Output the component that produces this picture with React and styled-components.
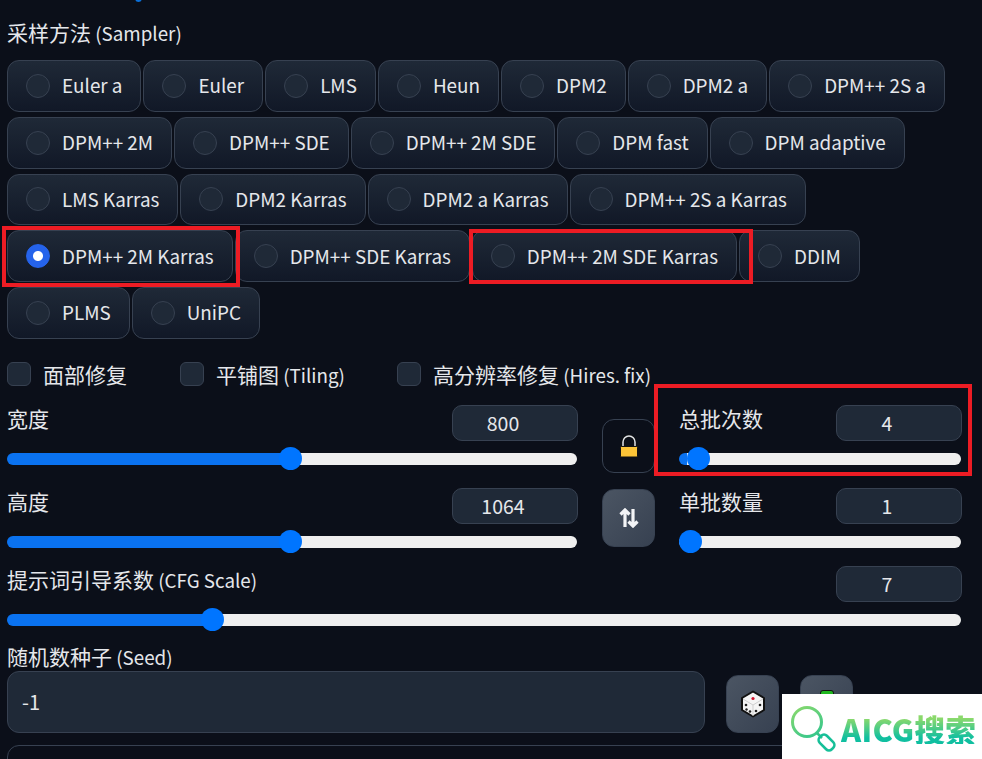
import styled, { createGlobalStyle } from 'styled-components';

const GlobalStyle = createGlobalStyle`
    html, body {
        margin: 0;
        background: #0b0f19;
    }
    body {
        font-family: 'Noto Sans CJK SC', 'Noto Sans', sans-serif;
        color: #f3f4f6;
    }
`;

const SAMPLERS = [
    'Euler a', 'Euler', 'LMS', 'Heun', 'DPM2', 'DPM2 a', 'DPM++ 2S a',
    'DPM++ 2M', 'DPM++ SDE', 'DPM++ 2M SDE', 'DPM fast', 'DPM adaptive',
    'LMS Karras', 'DPM2 Karras', 'DPM2 a Karras', 'DPM++ 2S a Karras',
    'DPM++ 2M Karras', 'DPM++ SDE Karras', 'DPM++ 2M SDE Karras', 'DDIM',
    'PLMS', 'UniPC',
];

const Page = styled.div`
    position: relative;
    box-sizing: border-box;
    width: 982px;
    height: 759px;
    overflow: hidden;
    padding: 19px 20px 0 7px;
    font-size: 18.8px;
`;

const TopThumb = styled.div`
    position: absolute;
    left: 135px;
    top: -6px;
    width: 7px;
    height: 8px;
    border-radius: 50%;
    background: #0a6fd8;
`;

const Label = styled.div`
    height: 26px;
    font-size: 18.8px;
    line-height: 26px;
    color: #e5e7eb;
    white-space: nowrap;
`;

// CJK runs sit a little larger than the latin text next to them
const Han = styled.span`
    font-size: 21px;
`;

const Samplers = styled.div`
    display: flex;
    flex-wrap: wrap;
    gap: 5px 2px;
    margin-top: 15px;
`;

const Option = styled.label`
    display: flex;
    align-items: center;
    gap: 12px;
    box-sizing: border-box;
    height: 51.75px;
    padding: 0 18px;
    border: 1px solid #374151;
    border-radius: 12px;
    background: linear-gradient(to bottom, #1f2937, #111827);
    font-size: 18.85px;
    line-height: 24px;
    color: #e5e7eb;
`;

const OptionText = styled.span`
    margin-top: -1px;
`;

const Radio = styled.input`
    appearance: none;
    box-sizing: border-box;
    width: 24px;
    height: 24px;
    margin: 0;
    border: 1px solid #374151;
    border-radius: 50%;
    background: #1f2937;

    &:checked {
        border-color: #2563eb;
        background: radial-gradient(circle, #fff 0 4.5px, #2563eb 5.5px);
    }
`;

const Checks = styled.div`
    display: flex;
    margin-top: 23px;
`;

const Check = styled.label`
    display: flex;
    align-items: center;
    gap: 12px;
    height: 24px;
    width: ${(p) => (p.$w ? `${p.$w}px` : 'auto')};
    white-space: nowrap;
    color: #e5e7eb;
`;

const Box = styled.input`
    appearance: none;
    box-sizing: border-box;
    width: 24px;
    height: 24px;
    margin: 0;
    border: 1px solid #374151;
    border-radius: 6px;
    background: #1f2937;
`;

const Sizes = styled.div`
    display: grid;
    grid-template-columns: 571px 101px 283px;
    row-gap: 15px;
    margin-top: 19px;
`;

const Field = styled.div`
    display: flex;
    flex-direction: column;
`;

const CfgField = styled(Field)`
    margin-top: 12px;
`;

const FieldHead = styled.div`
    display: flex;
    justify-content: space-between;
    align-items: flex-start;
    height: 36px;
`;

const Number = styled.input`
    box-sizing: border-box;
    width: 126px;
    height: 36px;
    padding: 0 24px 0 0;
    border: 1px solid #374151;
    border-radius: 10px;
    background: #1f2937;
    color: #e5e7eb;
    font: inherit;
    font-size: 19.5px;
    text-align: center;
    outline: none;
`;

const Range = styled.input`
    appearance: none;
    display: block;
    width: calc(100% - 1px);
    height: 24px;
    margin: 6px 0 0;
    background: transparent;

    &::-webkit-slider-runnable-track {
        height: 12px;
        border-radius: 6px;
        background: linear-gradient(to right, #0a72f0 ${(p) => p.$pct}%, #efefef ${(p) => p.$pct}%);
    }
    &::-webkit-slider-thumb {
        appearance: none;
        width: 23px;
        height: 23px;
        margin-top: -5.5px;
        border-radius: 50%;
        background: #0075ff;
    }
`;

const IconCell = styled.div`
    padding: ${(p) => p.$top}px 0 0 24px;
`;

const Outline = styled.div`
    display: flex;
    align-items: center;
    justify-content: center;
    box-sizing: border-box;
    width: 53px;
    height: 54px;
    border: 1px solid #374151;
    border-radius: 12px;
`;

const Square = styled.div`
    display: flex;
    align-items: center;
    justify-content: center;
    box-sizing: border-box;
    flex: none;
    width: 53px;
    height: 58px;
    border: 1px solid #374151;
    border-radius: 12px;
    background: linear-gradient(to bottom right, #4b5563, #374151);
`;

const SeedLabel = styled(Label)`
    margin-top: 11px;
`;

const SeedRow = styled.div`
    display: flex;
    align-items: flex-end;
    gap: 21px;
    margin-top: 2px;
`;

const SeedInput = styled.input`
    box-sizing: border-box;
    width: 698px;
    height: 62px;
    padding: 0 14px;
    border: 1px solid #374151;
    border-radius: 12px;
    background: #1f2937;
    color: #e5e7eb;
    font: inherit;
    font-size: 20px;
    outline: none;
`;

const Recycle = styled.div`
    align-self: flex-start;
    width: 12px;
    height: 12px;
    margin-top: 14px;
    border: 1px solid #111;
    border-radius: 3px;
    background: #1fb81f;
`;

const NextPanel = styled.div`
    height: 60px;
    margin-top: 12px;
    border: 1px solid #374151;
    border-radius: 12px;
`;

const Mark = styled.div`
    position: absolute;
    left: ${(p) => p.$x}px;
    top: ${(p) => p.$y}px;
    box-sizing: border-box;
    width: ${(p) => p.$w}px;
    height: ${(p) => p.$h}px;
    border: 4px solid #ed1c24;
`;

const Watermark = styled.div`
    position: absolute;
    right: 0;
    bottom: 0;
    display: flex;
    align-items: center;
    gap: 5px;
    box-sizing: border-box;
    width: 200px;
    height: 65px;
    padding-left: 8px;
    background: #fff;
`;

const WatermarkText = styled.span`
    margin-top: 5px;
    font-size: 30.5px;
    font-weight: 900;
    line-height: 1;
    letter-spacing: 0.3px;
    white-space: nowrap;
    background: linear-gradient(to bottom, #8bd96c 15%, #10bfa0 80%);
    -webkit-background-clip: text;
    background-clip: text;
    color: transparent;
`;

const Slider = ({ pct }) => <Range type='range' min='0' max='100' step='0.1' defaultValue={pct} $pct={pct} />;

const Dice = () => (
    <svg width='24' height='28' viewBox='0 0 24 28'>
        <path d='M12 1.5 23 8v12l-11 6.5L1 20V8z' fill='#f4f4f4' stroke='#111' strokeWidth='2' strokeLinejoin='round' />
        <path d='M2 9l10 6 10-6M12 15v11' fill='none' stroke='#cfcfcf' strokeWidth='1' />
        <circle cx='12' cy='8.5' r='1.6' fill='#d0102a' />
        <circle cx='5' cy='15' r='1.3' fill='#222' />
        <circle cx='5.5' cy='19.5' r='1.2' fill='#222' />
        <circle cx='9' cy='21.5' r='1.3' fill='#222' />
        <circle cx='19' cy='15' r='1.3' fill='#222' />
        <circle cx='15' cy='21' r='1.3' fill='#222' />
    </svg>
);

const Lock = () => (
    <svg width='20' height='24' viewBox='0 0 20 24'>
        <path d='M4 13V8a6 6 0 0 1 12 0V13' fill='none' stroke='#111' strokeWidth='3' />
        <path d='M4 13V8a6 6 0 0 1 12 0V13' fill='none' stroke='#dfe2e7' strokeWidth='1.5' />
        <rect x='1.5' y='12.5' width='17' height='10.5' rx='1' fill='#fcc437' stroke='#111' />
    </svg>
);

const Swap = () => (
    <svg width='20' height='20' viewBox='0 0 20 20' fill='none' stroke='#f3f4f6' strokeWidth='3.2'>
        <path d='M6 19V2M1.5 6.5 6 2l4.5 4.5' />
        <path d='M14 1v17M9.5 13.5 14 18l4.5-4.5' />
    </svg>
);

const Magnifier = () => (
    <svg width='46' height='56' viewBox='0 0 46 56' fill='none'>
        <defs>
            <linearGradient id='lens' x1='0' y1='0' x2='0.6' y2='1'>
                <stop offset='0' stopColor='#8bd96c' />
                <stop offset='1' stopColor='#3cc88a' />
            </linearGradient>
        </defs>
        <circle cx='17' cy='23' r='14.5' stroke='url(#lens)' strokeWidth='3' />
        <path d='M27 34l5 5' stroke='#38c48a' strokeWidth='2.5' />
        <rect x='28' y='38.5' width='17' height='10' rx='4' transform='rotate(45 36.5 43.5)' stroke='#16bf98' strokeWidth='2.6' />
    </svg>
);

const SliderField = ({ label, value, pct }) => (
    <Field>
        <FieldHead>
            <Label>
                <Han>{label}</Han>
            </Label>
            <Number readOnly defaultValue={value} />
        </FieldHead>
        <Slider pct={pct} />
    </Field>
);

const App = () => (
    <Page>
        <GlobalStyle />
        <TopThumb />
        <Label>
            <Han>采样方法</Han> (Sampler)
        </Label>
        <Samplers>
            {SAMPLERS.map((name) => (
                <Option key={name}>
                    <Radio type='radio' name='sampler' defaultChecked={name === 'DPM++ 2M Karras'} />
                    <OptionText>{name}</OptionText>
                </Option>
            ))}
        </Samplers>
        <Checks>
            <Check $w={173}>
                <Box type='checkbox' />
                <Han>面部修复</Han>
            </Check>
            <Check $w={217}>
                <Box type='checkbox' />
                <span>
                    <Han>平铺图</Han> (Tiling)
                </span>
            </Check>
            <Check>
                <Box type='checkbox' />
                <span>
                    <Han>高分辨率修复</Han> (Hires. fix)
                </span>
            </Check>
        </Checks>
        <Sizes>
            <SliderField label='宽度' value='800' pct={49.8} />
            <IconCell $top={14}>
                <Outline>
                    <Lock />
                </Outline>
            </IconCell>
            <SliderField label='总批次数' value='4' pct={2.9} />
            <SliderField label='高度' value='1064' pct={49.8} />
            <IconCell $top={1}>
                <Square>
                    <Swap />
                </Square>
            </IconCell>
            <SliderField label='单批数量' value='1' pct={0} />
        </Sizes>
        <CfgField>
            <FieldHead>
                <Label>
                    <Han>提示词引导系数</Han> (CFG Scale)
                </Label>
                <Number readOnly defaultValue='7' />
            </FieldHead>
            <Slider pct={20.8} />
        </CfgField>
        <SeedLabel>
            <Han>随机数种子</Han> (Seed)
        </SeedLabel>
        <SeedRow>
            <SeedInput readOnly defaultValue='-1' />
            <Square>
                <Dice />
            </Square>
            <Square>
                <Recycle />
            </Square>
        </SeedRow>
        <NextPanel />

        <Mark $x={2} $y={226} $w={238} $h={61} />
        <Mark $x={469} $y={229} $w={284} $h={55} />
        <Mark $x={654} $y={384} $w={318} $h={92} />
        <Watermark>
            <Magnifier />
            <WatermarkText>AICG搜索</WatermarkText>
        </Watermark>
    </Page>
);

export default App;
